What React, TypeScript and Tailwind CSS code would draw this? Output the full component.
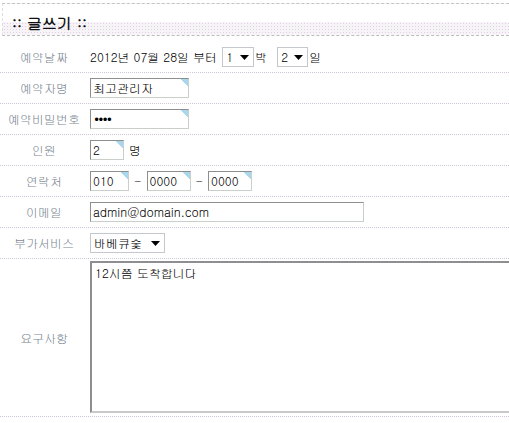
import React from "react";

const corner =
  "bg-[linear-gradient(225deg,#a9d7ee_0,#a9d7ee_5px,transparent_5px)] bg-white";

function Field({ w, children }: { w: string; children: React.ReactNode }) {
  return (
    <div
      className={`${w} h-[20px] shrink-0 border border-t-[#8e8e8e] border-l-[#8e8e8e] border-r-[#c9cfc9] border-b-[#c9cfc9] ${corner} pl-[2px] flex items-center leading-none text-black`}
    >
      {children}
    </div>
  );
}

function Select({ w, value }: { w: string; value: string }) {
  return (
    <div
      className={`${w} h-[20px] shrink-0 border border-[#c4c8cc] bg-white flex items-center justify-between pl-[3px] pr-[4px] leading-none`}
    >
      <span>{value}</span>
      <svg width="9" height="5" viewBox="0 0 9 5">
        <path d="M0 0h9L4.5 5z" fill="#000" />
      </svg>
    </div>
  );
}

function Row({ label, children }: { label: string; children: React.ReactNode }) {
  return (
    <div className="flex h-[31px] border-b border-dotted border-[#cfc6d6]">
      <div className="w-[88px] shrink-0 flex items-center justify-center text-[#7d8893]">{label}</div>
      <div className="flex-1 flex items-center pl-[2px] gap-[4px]">{children}</div>
    </div>
  );
}

export default function App() {
  return (
    <div className="w-[509px] h-[423px] overflow-hidden bg-white text-[12px] text-black font-['Gulim','Noto_Sans_CJK_KR','Noto_Sans',sans-serif]">
      <div className="ml-[2px] mt-[3px] h-[33px] border-t border-dashed border-t-[#c4c4c4] border-l border-l-[#dedede] border-b border-b-[#bdbdbd] flex items-center pl-[9px] pt-[5px] bg-[linear-gradient(to_bottom,#ffffff_0,#ffffff_18px,transparent_18px),radial-gradient(circle,#e2cfe6_0.7px,#f7f4f8_1px)] bg-[length:100%_100%,3px_3px]">
        <span className="font-bold text-[15px] leading-none text-[#111]">:: 글쓰기 ::</span>
      </div>

      <div className="mt-[6px]">
        <Row label="예약날짜">
          <span className="leading-none">2012년 07월 28일 부터</span>
          <div className="flex items-center gap-[1px] ml-[1px]">
            <Select w="w-[32px]" value="1" />
            <span className="leading-none">박</span>
            <div className="w-[8px]" />
            <Select w="w-[31px]" value="2" />
            <span className="leading-none">일</span>
          </div>
        </Row>
        <Row label="예약자명">
          <Field w="w-[99px]">최고관리자</Field>
        </Row>
        <Row label="예약비밀번호">
          <Field w="w-[99px]">
            <span className="text-[14px] tracking-[-1px] pl-[1px]">••••</span>
          </Field>
        </Row>
        <Row label="인원">
          <Field w="w-[34px]">2</Field>
          <span className="leading-none ml-[1px]">명</span>
        </Row>
        <Row label="연락처">
          <Field w="w-[39px]">010</Field>
          <span className="leading-none px-[1px]">-</span>
          <Field w="w-[44px]">0000</Field>
          <span className="leading-none px-[1px]">-</span>
          <Field w="w-[44px]">0000</Field>
        </Row>
        <Row label="이메일">
          <div className="w-[274px] h-[20px] border border-t-[#8e8e8e] border-l-[#8e8e8e] border-r-[#c9cfc9] border-b-[#c9cfc9] bg-white pl-[2px] flex items-center leading-none">
            admin@domain.com
          </div>
        </Row>
        <Row label="부가서비스">
          <Select w="w-[75px]" value="바베큐숯" />
        </Row>
        <div className="flex h-[158px] border-b border-dotted border-[#cfc6d6]">
          <div className="w-[88px] shrink-0 flex items-center justify-center text-[#7d8893]">요구사항</div>
          <div className="flex-1 min-w-0 pl-[2px] pt-[2px] pb-[3px]">
            <div className="w-[440px] h-full border-[2px] border-t-[#8e8e8e] border-l-[#8e8e8e] border-r-[#c9c9c9] border-b-[#c9c9c9] bg-white px-[3px] pt-[3px] leading-[14px]">
              12시쯤 도착합니다
            </div>
          </div>
        </div>
      </div>
    </div>
  );
}
